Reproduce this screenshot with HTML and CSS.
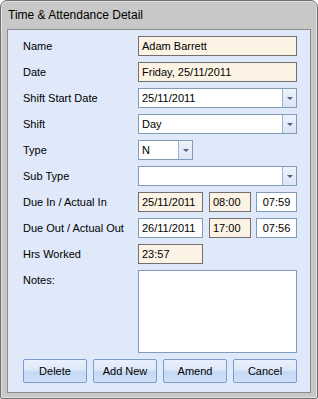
FILE: index.html
```html
<!DOCTYPE html>
<html lang="en">
<head>
    <meta charset="UTF-8">
    <meta name="viewport" content="width=device-width, initial-scale=1.0">
    <title>Time &amp; Attendance Detail</title>
    <link rel="stylesheet" href="styles.css">
</head>
<body>
    <div class="window">
        <div class="title-bar">Time &amp; Attendance Detail</div>

        <div class="client">
            <div class="form">
                <label>Name</label>
                <div class="field readonly">Adam Barrett</div>

                <label>Date</label>
                <div class="field readonly">Friday, 25/11/2011</div>

                <label>Shift Start Date</label>
                <div class="field combo">
                    <span class="combo-text">25/11/2011</span>
                    <span class="combo-btn"><span class="arrow"></span></span>
                </div>

                <label>Shift</label>
                <div class="field combo">
                    <span class="combo-text">Day</span>
                    <span class="combo-btn"><span class="arrow"></span></span>
                </div>

                <label>Type</label>
                <div class="field combo combo-small">
                    <span class="combo-text">N</span>
                    <span class="combo-btn"><span class="arrow"></span></span>
                </div>

                <label>Sub Type</label>
                <div class="field combo">
                    <span class="combo-text"></span>
                    <span class="combo-btn"><span class="arrow"></span></span>
                </div>

                <label>Due In / Actual In</label>
                <div class="time-row">
                    <div class="field readonly date-box">25/11/2011</div>
                    <div class="field readonly time-box">08:00</div>
                    <div class="field time-box actual">07:59</div>
                </div>

                <label>Due Out / Actual Out</label>
                <div class="time-row">
                    <div class="field date-box">26/11/2011</div>
                    <div class="field readonly time-box">17:00</div>
                    <div class="field time-box actual">07:56</div>
                </div>

                <label>Hrs Worked</label>
                <div class="field readonly date-box">23:57</div>

                <label class="top">Notes:</label>
                <div class="field notes"></div>
            </div>

            <!-- Action buttons -->
            <div class="buttons">
                <button class="btn">Delete</button>
                <button class="btn">Add New</button>
                <button class="btn">Amend</button>
                <button class="btn">Cancel</button>
            </div>
        </div>
    </div>
</body>
</html>
```

FILE: styles.css
```css
* {
    box-sizing: border-box;
}

body {
    margin: 0;
    font-family: "Liberation Sans", Arial, sans-serif;
    font-size: 11px;
    color: #000;
    background: #fff;
}

.window {
    width: 318px;
    height: 399px;
    display: flex;
    flex-direction: column;
    background: #c8c8c8;
    border: 1px solid #707070;
    border-radius: 7px 7px 2px 2px;
    box-shadow: inset 0 0 0 1px #e2e2e2;
}

.title-bar {
    height: 28px;
    padding: 6px 0 0 7px;
    font-size: 12px;
    line-height: 16px;
}

.client {
    margin: 0 6px 0 6px;
    height: 364px;
    border: 1px solid #8c8c8c;
    background: #dfe9f9;
    padding: 6px 13px 0 15px;
}

.form {
    display: grid;
    grid-template-columns: 115px 159px;
    row-gap: 6px;
}

.form label {
    line-height: 20px;
    white-space: nowrap;
}

.form label.top {
    align-self: start;
}

.field {
    height: 20px;
    border: 1px solid #7f9db9;
    background: #fff;
    padding: 0 3px;
    line-height: 18px;
    white-space: nowrap;
    overflow: hidden;
}

.readonly {
    background: #fdf3e4;
    border-color: #707070;
}

.combo {
    display: flex;
    padding: 0;
}

.combo-small {
    width: 55px;
}

.combo-text {
    flex: 1;
    padding-left: 3px;
}

.combo-btn {
    width: 14px;
    border-left: 1px solid #9bb3d4;
    background: linear-gradient(#eef3fb, #dbe6f5);
    display: flex;
    align-items: center;
    justify-content: center;
}

.arrow {
    width: 0;
    height: 0;
    border-left: 3px solid transparent;
    border-right: 3px solid transparent;
    border-top: 3px solid #4d6185;
}

.time-row {
    display: flex;
}

.date-box {
    width: 65px;
}

.time-box {
    width: 42px;
    margin-left: 6px;
}

.time-box.actual {
    width: 41px;
    margin-left: 5px;
    text-align: center;
}

.notes {
    height: 83px;
}

.buttons {
    display: flex;
    gap: 6px;
    margin-top: 6px;
}

.btn {
    width: 64px;
    height: 24px;
    padding: 0;
    font-family: "Liberation Sans", Arial, sans-serif;
    font-size: 11px;
    color: #000;
    border: 1px solid #7b9bcc;
    border-radius: 2px;
    background: linear-gradient(#eaf1fb 0%, #dde8f8 45%, #c5d9f4 55%, #cfe0f7 100%);
}
```
